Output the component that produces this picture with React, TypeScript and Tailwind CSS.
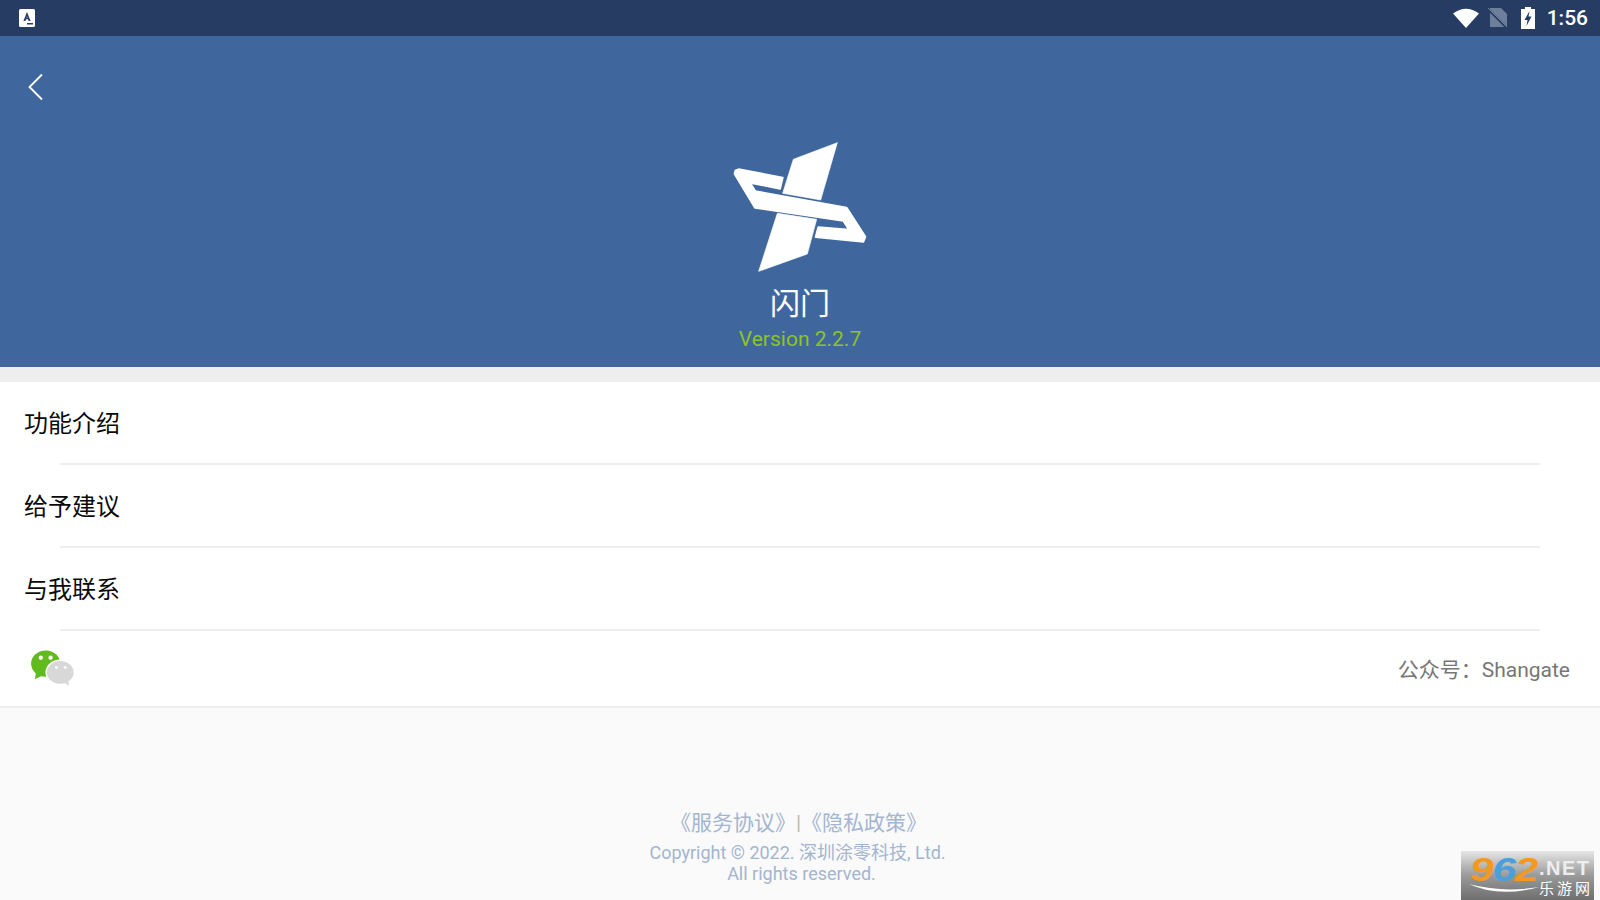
const cjk = "font-['Roboto','Noto_Sans_CJK_SC',sans-serif]"

const rows = ['功能介绍', '给予建议', '与我联系']

function Logo() {
  return (
    <svg width="200" height="150" viewBox="0 0 600 450" fill="#fff" stroke="#fff" strokeLinejoin="round">
      <path strokeWidth="2" d="M412 38 280 88 248 190 362 210Z" />
      <path strokeWidth="2" d="M232 250 350 268 322 372 176 424Z" />
      <path
        strokeWidth="6"
        d="M106 122 116 118 248 143 240 176 150 158 166 184 440 233 496 320 490 335 347 321 355 292 447 299 430 272 165 233 104 132Z"
      />
    </svg>
  )
}

function StatusBar() {
  return (
    <div className="h-9 bg-[#263c63] flex items-center justify-between pl-[19px] pr-[12px]">
      <svg width="16" height="18" viewBox="0 0 16 18">
        <rect width="16" height="18" y="0" rx="1.5" fill="#fff" />
        <path d="M8 3 11.6 12H9.6L9 10.3H7L6.4 12H4.4ZM7.5 8.8H8.5L8 7.2Z" fill="#263c63" fillRule="evenodd" />
        <rect x="8" y="14" width="6" height="1.5" fill="#263c63" />
      </svg>
      <div className="flex items-center">
        <svg width="26" height="20" viewBox="0 0 26 20" className="mr-[9px]">
          <path d="M0 5.5Q13-4 26 5.5L13 20Z" fill="#fff" />
        </svg>
        <svg width="20" height="20" viewBox="0 0 20 20" className="mr-[13px]">
          <path d="M2 0H13L19 6V19H2Z" fill="#6e7f9c" />
          <path d="M0 1 19 20" stroke="#263c63" strokeWidth="2.4" />
          <path d="M0 0 19 19" stroke="#6e7f9c" strokeWidth="1" />
        </svg>
        <svg width="14" height="22" viewBox="0 0 14 22" className="mr-[12px]">
          <path d="M4 0H10V2H14V22H0V2H4Z" fill="#fff" />
          <path d="M8.5 4 3.5 13H6.5L5.5 19 10.5 9.5H7.5Z" fill="#263c63" />
        </svg>
        <span className="font-['Roboto',sans-serif] text-[21px] leading-none font-medium text-white">1:56</span>
      </div>
    </div>
  )
}

export default function App() {
  return (
    <div className={`w-[1600px] h-[900px] overflow-hidden relative bg-[#fafafa] ${cjk}`}>
      <StatusBar />

      {/* header */}
      <div className="h-[331px] bg-[#3f679e] relative flex flex-col items-center pt-[94px]">
        <svg width="18" height="28" viewBox="0 0 18 28" fill="none" className="absolute left-[27px] top-[37px]">
          <path d="M15 1.5 2.5 14 15 26.5" stroke="#fff" strokeWidth="1.8" />
        </svg>
        <Logo />
        <div className="text-[30px] leading-[40px] text-white mt-[4px]">闪门</div>
        <div className="text-[21px] leading-[24px] text-[#8cc425] mt-[3px]">Version 2.2.7</div>
      </div>
      <div className="h-[15px] bg-[#eeeeee]" />

      {/* menu */}
      <div className="bg-white">
        {rows.map((t) => (
          <div key={t} className="h-[83px] flex flex-col">
            <div className="flex-1 flex items-center pl-[24px] pt-[2px] text-[24px] text-[#0a0a0a]">{t}</div>
            <div className="h-[2px] ml-[60px] mr-[60px] bg-[#eeeeee]" />
          </div>
        ))}
        <div className="h-[77px] flex items-center justify-between pl-[30px] pr-[30px] border-b-2 border-[#eeeeee]">
          <svg width="45" height="37" viewBox="0 0 46 38" className="-mt-[2px]">
            <ellipse cx="16" cy="15" rx="15" ry="13.5" fill="#62bb1e" />
            <path d="M6 24 5 31 13 27Z" fill="#62bb1e" />
            <circle cx="11" cy="9" r="2.2" fill="#fff" />
            <circle cx="21" cy="9" r="2.2" fill="#fff" />
            <ellipse cx="31" cy="24" rx="14.5" ry="12.5" fill="#d8d8d8" stroke="#fff" strokeWidth="1.5" />
            <path d="M34 34 40 38 39 32Z" fill="#d8d8d8" />
            <circle cx="27" cy="19" r="1.5" fill="#fff" />
            <circle cx="36" cy="19" r="1.5" fill="#fff" />
          </svg>
          <span className="text-[21px] pt-[5px] text-[#777777]">公众号：Shangate</span>
        </div>
      </div>

      {/* footer */}
      <div className="flex flex-col items-center pt-[101px] text-[#a3b5d0]">
        <div className="text-[21px] leading-[28px] mr-[3px]">
          《服务协议》<span className="text-[#bbbbbb]">|</span>《隐私政策》
        </div>
        <div className="text-[18px] leading-[21px] mt-[5px] mr-[5px]">Copyright © 2022. 深圳涂零科技, Ltd.</div>
        <div className="text-[18px] leading-[21px] ml-[3px]">All rights reserved.</div>
      </div>

      {/* watermark */}
      <div className="absolute left-[1461px] top-[851px] w-[133px] h-[49px] bg-gradient-to-b from-[#e6e6e6] via-[#9a9a9a] to-[#6f6f6f] overflow-hidden font-['Liberation_Sans',sans-serif]">
        <div className="absolute left-[9px] top-[0px] origin-left scale-x-[1.25] text-[34px] leading-[36px] font-bold italic tracking-[-1px]">
          <span className="text-[#f39a1e]">9</span>
          <span className="text-[#4aa0dc]">6</span>
          <span className="text-[#f39a1e]">2</span>
        </div>
        <div className="absolute left-[78px] top-[5px] text-[20px] leading-[24px] font-bold text-[#eeeeee] tracking-[1.5px]">.NET</div>
        <div className="absolute left-[78px] top-[28px] text-[15px] leading-[18px] text-white tracking-[3px] font-['Noto_Sans_CJK_SC',sans-serif]">乐游网</div>
        <svg width="76" height="14" viewBox="0 0 76 14" className="absolute left-[6px] top-[31px]">
          <path d="M2 2Q32 16 72 5Q36 11 2 2Z" fill="#fff" />
        </svg>
      </div>
    </div>
  )
}
